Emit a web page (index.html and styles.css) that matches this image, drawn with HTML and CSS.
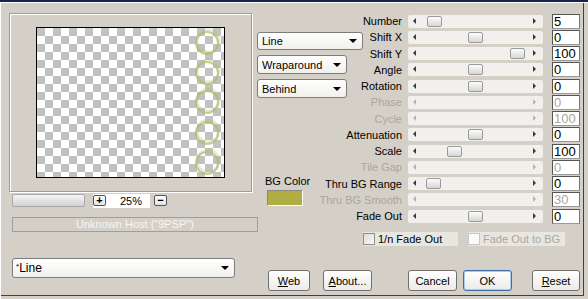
FILE: index.html
```html
<!DOCTYPE html>
<html lang="en">

<head>
    <meta charset="UTF-8">
    <meta name="viewport" content="width=device-width, initial-scale=1.0">
    <title>Line</title>
    <link rel="stylesheet" href="styles.css">
</head>

<body>
    <div class="window">
        <div class="left">
            <div class="preview-panel">
                <div class="preview">
                    <svg width="187" height="149" viewBox="0 0 187 149">
                        <g fill="none" stroke="#b4b86c">
                            <circle cx="171" cy="13" r="11" stroke-width="3" opacity="0.3" />
                            <circle cx="170" cy="15" r="11" stroke-width="2" opacity="0.7" />
                            <circle cx="171" cy="43" r="11" stroke-width="3" opacity="0.3" />
                            <circle cx="170" cy="45" r="11" stroke-width="2" opacity="0.7" />
                            <circle cx="171" cy="72" r="11" stroke-width="3" opacity="0.3" />
                            <circle cx="170" cy="74" r="11" stroke-width="2" opacity="0.7" />
                            <circle cx="171" cy="103" r="11" stroke-width="3" opacity="0.3" />
                            <circle cx="170" cy="105" r="11" stroke-width="2" opacity="0.7" />
                            <circle cx="171" cy="133" r="11" stroke-width="3" opacity="0.3" />
                            <circle cx="170" cy="135" r="11" stroke-width="2" opacity="0.7" />
                        </g>
                    </svg>
                </div>
            </div>

            <div class="zoom-row">
                <div class="zoom-bar"></div>
                <div class="zoom-box">
                    <span class="mini-btn">+</span>
                    <span class="zoom-value">25%</span>
                </div>
                <span class="mini-btn">&minus;</span>
            </div>

            <div class="host">Unknown Host ("9PSP")</div>

            <div class="combo combo-preset">
                <span><sup>*</sup>Line</span>
                <i class="arrow-down"></i>
            </div>
        </div>

        <div class="right">
            <div class="params">
                <div class="modes">
                    <div class="combo combo-line"><span>Line</span><i class="arrow-down"></i></div>
                    <div class="combo combo-mode"><span>Wraparound</span><i class="arrow-down"></i></div>
                    <div class="combo combo-mode"><span>Behind</span><i class="arrow-down"></i></div>
                    <div class="bg-label">BG Color</div>
                    <div class="swatch"></div>
                </div>

                <div class="rows">
                    <div class="row">
                        <div class="label">Number</div>
                        <div class="track"><span class="thumb" style="left: 19px"></span></div>
                        <div class="edit">5</div>
                    </div>
                    <div class="row">
                        <div class="label">Shift X</div>
                        <div class="track"><span class="thumb" style="left: 60px"></span></div>
                        <div class="edit">0</div>
                    </div>
                    <div class="row">
                        <div class="label">Shift Y</div>
                        <div class="track"><span class="thumb" style="left: 102px"></span></div>
                        <div class="edit">100</div>
                    </div>
                    <div class="row">
                        <div class="label">Angle</div>
                        <div class="track"><span class="thumb" style="left: 60px"></span></div>
                        <div class="edit">0</div>
                    </div>
                    <div class="row">
                        <div class="label">Rotation</div>
                        <div class="track"><span class="thumb" style="left: 60px"></span></div>
                        <div class="edit">0</div>
                    </div>
                    <div class="row disabled">
                        <div class="label">Phase</div>
                        <div class="track"></div>
                        <div class="edit">0</div>
                    </div>
                    <div class="row disabled">
                        <div class="label">Cycle</div>
                        <div class="track"></div>
                        <div class="edit">100</div>
                    </div>
                    <div class="row">
                        <div class="label">Attenuation</div>
                        <div class="track"><span class="thumb" style="left: 60px"></span></div>
                        <div class="edit">0</div>
                    </div>
                    <div class="row">
                        <div class="label">Scale</div>
                        <div class="track"><span class="thumb" style="left: 39px"></span></div>
                        <div class="edit">100</div>
                    </div>
                    <div class="row disabled">
                        <div class="label">Tile Gap</div>
                        <div class="track"></div>
                        <div class="edit">0</div>
                    </div>
                    <div class="row">
                        <div class="label">Thru BG Range</div>
                        <div class="track"><span class="thumb" style="left: 18px"></span></div>
                        <div class="edit">0</div>
                    </div>
                    <div class="row disabled">
                        <div class="label">Thru BG Smooth</div>
                        <div class="track"></div>
                        <div class="edit">30</div>
                    </div>
                    <div class="row">
                        <div class="label">Fade Out</div>
                        <div class="track"><span class="thumb" style="left: 60px"></span></div>
                        <div class="edit">0</div>
                    </div>
                </div>
            </div>

            <div class="checks">
                <label class="check"><span class="box"></span>1/n Fade Out</label>
                <label class="check disabled"><span class="box"></span>Fade Out to BG</label>
            </div>

            <div class="buttons">
                <button class="btn btn-web"><u>W</u>eb</button>
                <button class="btn btn-about"><u>A</u>bout...</button>
                <button class="btn btn-cancel">Cancel</button>
                <button class="btn btn-ok">OK</button>
                <button class="btn btn-reset"><u>R</u>eset</button>
            </div>
        </div>
    </div>
</body>

</html>
```

FILE: styles.css
```css
body {
    margin: 0;
    padding: 0;
    background-color: #d4d0c8;
    font-family: "Liberation Sans", Arial, sans-serif;
    font-size: 11px;
    color: #000;
}

.window {
    width: 588px;
    height: 299px;
    box-sizing: border-box;
    border-top: 2px solid #16244a;
    padding: 11px 0 0 9px;
    display: flex;
    box-shadow: inset 1px 1px 0 #ffffff, inset -4px -3px 0 #d4d0c8, inset -5px -4px 0 #404040;
}

/* left column: preview and preset */
.left {
    width: 243px;
    display: flex;
    flex-direction: column;
}

.preview-panel {
    width: 243px;
    height: 179px;
    box-sizing: border-box;
    border: 1px solid #a09d96;
    box-shadow: 1px 1px 0 #fff, inset 1px 1px 0 #fff;
    display: flex;
    justify-content: center;
    align-items: center;
}

.preview {
    width: 189px;
    height: 151px;
    box-sizing: border-box;
    border: 1px solid #000;
    background: conic-gradient(#fff 25%, #c2c2c2 0 50%, #fff 0 75%, #c2c2c2 0) 0 0 / 16px 16px;
}

.preview svg {
    display: block;
}

.zoom-row {
    margin-top: 1px;
    height: 15px;
    display: flex;
    align-items: center;
}

.zoom-bar {
    width: 73px;
    height: 13px;
    margin-left: 3px;
    box-sizing: border-box;
    border: 1px solid #a8a8a8;
    border-radius: 2px;
    background: linear-gradient(#f4f4f4, #d2d2d2);
}

.zoom-box {
    margin-left: 8px;
    width: 57px;
    height: 14px;
    background-color: #fff;
    display: flex;
    align-items: center;
}

.zoom-value {
    margin-left: 14px;
}

.mini-btn {
    width: 13px;
    height: 11px;
    box-sizing: border-box;
    border: 1px solid #555;
    border-radius: 2px;
    background: linear-gradient(#ffffff, #e2e2e2);
    display: flex;
    align-items: center;
    justify-content: center;
    font-weight: bold;
    line-height: 9px;
}

.zoom-row > .mini-btn {
    margin-left: 4px;
}

.host {
    margin: 9px 0 0 3px;
    width: 246px;
    height: 15px;
    box-sizing: border-box;
    border: 1px solid #a19e97;
    text-align: center;
    line-height: 13px;
    color: #f6f5f1;
}

/* drop-down boxes */
.combo {
    box-sizing: border-box;
    border: 1px solid #7c7c7c;
    border-radius: 3px;
    background: linear-gradient(#ffffff, #f1f0ec);
    display: flex;
    align-items: center;
    padding: 0 5px 0 4px;
}

.combo span {
    flex: 1;
}

.combo sup {
    font-size: 8px;
    vertical-align: 3px;
}

.arrow-down {
    width: 0;
    height: 0;
    border-left: 4px solid transparent;
    border-right: 4px solid transparent;
    border-top: 4px solid #000;
}

.combo-preset {
    margin: 26px 0 0 3px;
    width: 223px;
    height: 20px;
    padding-left: 3px;
    font-size: 12px;
}

.combo-line {
    width: 106px;
    height: 18px;
}

.combo-mode {
    width: 90px;
    height: 19px;
    margin-top: 5px;
}

/* right part */
.right {
    margin-left: 5px;
    width: 323px;
    display: flex;
    flex-direction: column;
}

.params {
    display: flex;
}

.modes {
    width: 106px;
    padding-top: 19px;
    display: flex;
    flex-direction: column;
}

.bg-label {
    margin: 77px 0 0 8px;
    line-height: 12px;
}

.swatch {
    margin: 3px 0 0 10px;
    width: 36px;
    height: 16px;
    box-sizing: border-box;
    background-color: #b0ad42;
    border: 1px solid #8a877f;
    border-right-color: #fff;
    border-bottom-color: #fff;
}

.rows {
    display: flex;
    flex-direction: column;
}

.row {
    height: 16.25px;
    display: flex;
    align-items: center;
}

.label {
    width: 39px;
    display: flex;
    justify-content: flex-end;
    white-space: nowrap;
}

.track {
    position: relative;
    margin-left: 6px;
    width: 135px;
    height: 13px;
    border-radius: 2px;
    background-color: #f1f0ec;
}

.track::before,
.track::after {
    content: "";
    position: absolute;
    top: 3px;
    border-top: 3px solid transparent;
    border-bottom: 3px solid transparent;
}

.track::before {
    left: 5px;
    border-right: 3px solid #3a3a3a;
}

.track::after {
    right: 7px;
    border-left: 3px solid #3a3a3a;
}

.thumb {
    position: absolute;
    top: 1px;
    width: 15px;
    height: 11px;
    box-sizing: border-box;
    border: 1px solid #9a9a9a;
    border-radius: 2px;
    background: linear-gradient(#fdfdfd, #d6d6d6);
}

.edit {
    margin-left: 9px;
    width: 28px;
    height: 15px;
    box-sizing: border-box;
    border: 1px solid #555;
    border-right-color: #777;
    border-bottom-color: #999;
    background-color: #fff;
    padding-left: 1px;
    font-size: 13px;
    line-height: 13px;
}

.disabled .label,
.disabled .edit {
    color: #a9a69f;
}

.disabled .track::before {
    border-right-color: #b4b4b4;
}

.disabled .track::after {
    border-left-color: #b4b4b4;
}

/* check boxes */
.checks {
    margin: 8px 0 0 106px;
    display: flex;
    gap: 10px;
}

.check {
    height: 14px;
    display: flex;
    align-items: center;
    gap: 3px;
    white-space: nowrap;
    background-color: #e8e6e0;
}

.check:first-child {
    width: 95px;
}

.check.disabled {
    width: 97px;
    color: #a9a69f;
}

.box {
    width: 12px;
    height: 12px;
    box-sizing: border-box;
    border: 1px solid #8e8f8f;
    background: linear-gradient(135deg, #dcdcd6, #f8f8f6);
}

.check.disabled .box {
    border-color: #c9c7c0;
    background: #fbfbfa;
}

/* bottom buttons */
.buttons {
    margin-top: 24px;
    display: flex;
}

.btn {
    height: 21px;
    box-sizing: border-box;
    border: 1px solid #707070;
    border-radius: 3px;
    background: linear-gradient(#ffffff, #ecebe6);
    font-family: "Liberation Sans", Arial, sans-serif;
    font-size: 11px;
    padding: 0;
    color: #000;
}

.btn-web {
    margin-left: 11px;
    width: 42px;
}

.btn-about {
    margin-left: 13px;
    width: 49px;
}

.btn-cancel {
    margin-left: 36px;
    width: 49px;
}

.btn-ok {
    margin-left: 6px;
    width: 49px;
    border-color: #3c6fa8;
    box-shadow: inset 0 0 0 1px #a8cdef;
}

.btn-reset {
    margin-left: 20px;
    width: 48px;
}
```
